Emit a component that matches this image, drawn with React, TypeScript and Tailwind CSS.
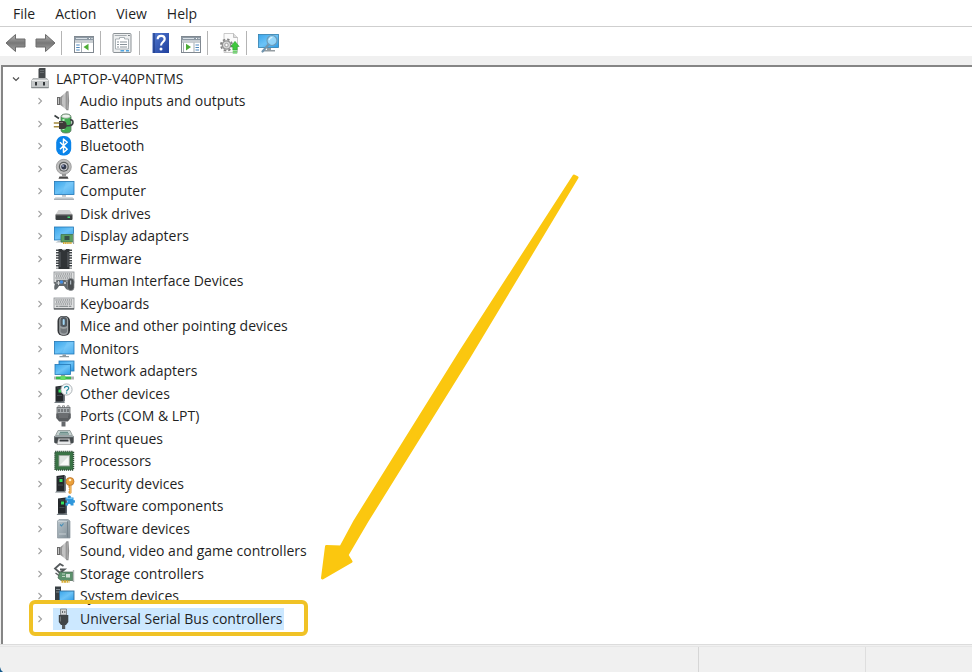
import React from "react";

type Glyph = () => React.ReactElement;

function Svg({ children }: { children: React.ReactNode }) {
  return (
    <svg viewBox="0 0 22 22" className="size-[22px] shrink-0" aria-hidden="true">
      {children}
    </svg>
  );
}

const Defs = () => (
  <svg className="absolute size-0" aria-hidden="true">
    <defs>
      <linearGradient id="screen" x1="0" y1="0" x2="1" y2="1">
        <stop offset="0" stopColor="#3aa5ea" />
        <stop offset="0.5" stopColor="#6cc3f7" />
        <stop offset="1" stopColor="#2c9ae4" />
      </linearGradient>
      <linearGradient id="metal" x1="0" y1="0" x2="1" y2="0">
        <stop offset="0" stopColor="#7c7c7c" />
        <stop offset="0.6" stopColor="#cfcfcf" />
        <stop offset="1" stopColor="#8a8a8a" />
      </linearGradient>
      <linearGradient id="arrow" x1="0" y1="0" x2="0" y2="1">
        <stop offset="0" stopColor="#b5b5b5" />
        <stop offset="0.5" stopColor="#777" />
        <stop offset="1" stopColor="#a5a5a5" />
      </linearGradient>
      <linearGradient id="case" x1="0" y1="0" x2="1" y2="1">
        <stop offset="0" stopColor="#b9c5cc" />
        <stop offset="1" stopColor="#7f8c94" />
      </linearGradient>
      <linearGradient id="book" x1="0" y1="0" x2="1" y2="1">
        <stop offset="0" stopColor="#5078d0" />
        <stop offset="1" stopColor="#1f3f9c" />
      </linearGradient>
    </defs>
  </svg>
);

const Tower = ({ x = 2, y = 1 }: { x?: number; y?: number }) => (
  <g transform={`translate(${x} ${y})`}>
    <path d="M1 1.5 8.5 .5 10 1.5V16.500L2 17.500 1 16.500Z" fill="#25292c" />
    <path d="M8.500 1v15.500l1.500-.5V1.500Z" fill="#59616a" />
    <path d="M2.500 3h5M2.500 10.500h5" stroke="#4d555b" strokeWidth=".8" />
    <rect x="4" y="4.500" width="3" height="3" fill="#35e05a" />
    <path d="M-.5 18h11l-1-1.500H1Z" fill="#747d82" />
  </g>
);

const Speaker: Glyph = () => (
  <Svg>
    <path d="M4 7h3.500v8H4Z" fill="#6a6a6a" />
    <path d="M5 8h1v6H5Z" fill="#c6c6c6" />
    <path d="M7.500 7 14 1.200v19L7.500 15Z" fill="url(#metal)" />
    <path d="M9 7.800 12 5v11.500L9 14Z" fill="#c2c2c2" />
    <path d="M13.500 1.200h2q1.300 9.500 0 19h-2Z" fill="#8d8d8d" />
    <path d="M14.300 2.500v16.500" stroke="#b5b5b5" strokeWidth=".8" />
  </Svg>
);

const Battery: Glyph = () => (
  <Svg>
    <path d="M8 4q0-3 5-3t5 3v13q0 3-5 3t-5-3Z" fill="#42ad52" stroke="#55735a" strokeWidth=".8" />
    <ellipse cx="13" cy="3.200" rx="4.300" ry="2" fill="#eef5ee" stroke="#8a958b" strokeWidth=".6" />
    <path d="M10.500 6v11" stroke="#b7eec0" strokeWidth="2" />
    <path d="M17 7c4-1 4 5 0 5.500-2 .5-3 0-4 .500M1.500 2.500l4.500 3" fill="none" stroke="#3b4142" strokeWidth="1.600" />
    <path d="M6 8h4.500c4 0 4.500 8 0 8H6Z" fill="#3e3b38" />
    <path d="M6.500 9.500H10" stroke="#838079" strokeWidth="1" />
    <path d="M.8 10H6M.8 13.800H6" stroke="#a58b3b" strokeWidth="1.500" />
  </Svg>
);

const Bluetooth: Glyph = () => (
  <Svg>
    <rect x="3.200" y="1" width="15" height="19.500" rx="6.500" fill="#0a84ea" />
    <path d="M7 7.200l7.200 7-3.700 3.300V4l3.700 3.300L7 14.200" fill="none" stroke="#fff" strokeWidth="1.500" strokeLinejoin="round" />
  </Svg>
);

const Camera: Glyph = () => (
  <Svg>
    <path d="M6.500 18.500h8l1 2.200h-10Z" fill="#474747" />
    <path d="M9 16h4v3H9Z" fill="#999" />
    <circle cx="10.800" cy="8.800" r="7.500" fill="#bdbdbd" stroke="#898989" strokeWidth=".7" />
    <circle cx="10.800" cy="8.800" r="5" fill="#5d6060" />
    <circle cx="10.800" cy="8.800" r="3.700" fill="#d1d1d6" />
    <circle cx="10.800" cy="8.800" r="2.600" fill="#333b4d" />
    <circle cx="10" cy="8" r=".9" fill="#a4aed2" />
  </Svg>
);

const Computer: Glyph = () => (
  <Svg>
    <rect x="1.500" y="1.500" width="19.500" height="13" fill="url(#screen)" stroke="#2477b5" strokeWidth=".8" />
    <path d="M13 2 20.500 2V14L9 14Z" fill="#8cd2fb" opacity=".35" />
    <path d="M9 15h4v1.800H9Z" fill="#c0c5c9" />
    <path d="M2.500 17h17l1.500 2.500H1Z" fill="#d6dadd" />
    <path d="M1 19.200h20" stroke="#8d979e" strokeWidth="1" />
  </Svg>
);

const Disk: Glyph = () => (
  <Svg>
    <path d="M5.500 7h11l3 4.500h-17Z" fill="#d0d0d0" />
    <path d="M2.500 11.500h17V16q0 1-1 1h-15q-1 0-1-1Z" fill="#3a3d3f" />
    <path d="M3 12h16" stroke="#777" strokeWidth=".8" />
    <rect x="14.500" y="13.500" width="2.500" height="1.500" fill="#43dd72" />
  </Svg>
);

const Display: Glyph = () => (
  <Svg>
    <rect x="1.500" y="2" width="19" height="13" fill="url(#screen)" stroke="#2477b5" strokeWidth=".8" />
    <path d="M2.500 17.500 6 15.500h4v2Z" fill="#b8c2c8" />
    <path d="M8 9.500h12.500V17H8Z" fill="#5b9e61" stroke="#3d6e46" strokeWidth=".7" />
    <rect x="11.500" y="11" width="5" height="4" fill="#355048" />
    <path d="M10 18h9" stroke="#d4a934" strokeWidth="2" strokeDasharray="1.500 .6" />
    <path d="M20.500 8.500v10.500" stroke="#9ba2a5" strokeWidth="1.200" />
  </Svg>
);

const Firmware: Glyph = () => (
  <Svg>
    <path d="M4.500 1.500v19M17.500 1.500v19" stroke="#41464a" strokeWidth="3" strokeDasharray="1.500 1.100" />
    <path d="M5.500 1h3.500q2 2.500 4 0H16.500v20H5.500Z" fill="#303437" />
    <path d="M7 4v15M15 4v15" stroke="#6a7075" strokeWidth=".8" />
    <path d="M9 1q2 2.500 4 0Z" fill="#c9cdd0" />
  </Svg>
);

const Keys = ({ y }: { y: number }) => (
  <g transform={`translate(0 ${y})`}>
    <rect x="1" y="0" width="20" height="11" fill="#dfe0e1" stroke="#8c9194" strokeWidth=".8" />
    <path d="M2.500 2h17M3 4h16M2.500 6h17" stroke="#6a6f72" strokeWidth="1.100" strokeDasharray="1.200 .7" />
    <path d="M3 8.200h16" stroke="#73787b" strokeWidth="1.100" strokeDasharray="2.500 .7 9 .7" />
    <path d="M1 10.900h20" stroke="#4c5154" strokeWidth="1.200" />
  </g>
);

const Hid: Glyph = () => (
  <Svg>
    <Keys y={2} />
    <path d="M1.500 19.500c-1-3 1-9.500 4-9.500h6c3 0 4 6.500 3.500 9.500-1.500 1-3-2-4-3.500H6c-1 2-3 4.500-4.500 3.500Z" fill="#63696d" />
    <path d="M3.500 13h4M5.500 11v4" stroke="#d1d5d8" strokeWidth="1" />
    <circle cx="8.500" cy="12" r="1.700" fill="#428be1" />
    <circle cx="12" cy="13" r="1" fill="#dedede" />
    <rect x="14.500" y="8.500" width="6.500" height="12" rx="3" fill="#4b4f52" stroke="#858a8e" strokeWidth=".7" />
    <path d="M17.700 10.500v4" stroke="#c7d2db" strokeWidth="1" />
  </Svg>
);

const Keyboard: Glyph = () => (
  <Svg>
    <Keys y={5} />
  </Svg>
);

const Mouse: Glyph = () => (
  <Svg>
    <rect x="4.500" y="1" width="12.500" height="19.800" rx="5" fill="#34373a" />
    <rect x="6.200" y="1.500" width="9" height="18.500" rx="4" fill="#9ca0a3" />
    <path d="M7.500 11V5q0-3 3.200-3T14 5v6q-3 2-6.500 0Z" fill="#525960" />
    <rect x="9.700" y="4" width="2" height="6" rx="1" fill="#a2d6f5" />
    <path d="M7.500 13q3 2 6.500 0v4q-3 3-6.500 0Z" fill="#73787c" />
  </Svg>
);

const Monitor: Glyph = () => (
  <Svg>
    <rect x="1.500" y="3.500" width="19.500" height="12.500" fill="url(#screen)" stroke="#2477b5" strokeWidth=".8" />
    <path d="M14 4H20.500V15.500H9Z" fill="#8cd2fb" opacity=".35" />
    <path d="M9.500 16.500h3.500V18h3v1.200H6.500V18h3Z" fill="#8e999f" />
  </Svg>
);

const Network: Glyph = () => (
  <Svg>
    <rect x="6" y="1" width="15" height="10" fill="url(#screen)" stroke="#2477b5" strokeWidth=".8" />
    <rect x="2" y="4.500" width="15.500" height="10" fill="url(#screen)" stroke="#2477b5" strokeWidth=".8" />
    <path d="M8 15h4v2H8Z" fill="#969ca0" />
    <path d="M1 18h20" stroke="#b0b5b5" strokeWidth="3" />
    <path d="M3 18h15" stroke="#38b949" strokeWidth="2.600" />
    <path d="M7.500 15.800h5v4.200h-5Z" fill="#67db68" />
  </Svg>
);

const Other: Glyph = () => (
  <Svg>
    <Tower x={1.500} y={2} />
    <circle cx="13.500" cy="6.500" r="5.600" fill="#f7f9fa" stroke="#a5abaf" strokeWidth=".9" />
    <path d="M11.500 5.200c0-2.600 4.200-2.500 4.200 0 0 1.600-2.100 1.500-2.100 3.300" fill="none" stroke="#2b8b9f" strokeWidth="1.200" />
    <circle cx="13.600" cy="10" r=".8" fill="#2b8b9f" />
  </Svg>
);

const Ports: Glyph = () => (
  <Svg>
    <path d="M5 4V.8h2V4M9.500 4V.8h2V4M14 4V.8h2V4" fill="none" stroke="#8c9092" strokeWidth="1" />
    <rect x="4" y="2.500" width="13" height="6" fill="#a8adb0" stroke="#65696c" strokeWidth=".8" />
    <path d="M6 4v3M9 4v3M12 4v3M15 4v3" stroke="#55595b" strokeWidth="1.200" />
    <path d="M3.200 8.500h14.600V13l-3 3.500H6.200l-3-3.500Z" fill="#5a5d60" />
    <path d="M5.500 10h10M6 12h9" stroke="#85898c" strokeWidth=".8" />
    <path d="M8.500 16.500h4v5h-4Z" fill="#66696c" />
  </Svg>
);

const Printer: Glyph = () => (
  <Svg>
    <path d="M5 2.500h12l2.500 5h-17Z" fill="#c5d1d0" stroke="#7e8787" strokeWidth=".7" />
    <path d="M7 4.300h8M6 6h10" stroke="#567e78" strokeWidth="1" />
    <path d="M1.200 8h19.500v6.500l-1.500 1H2.700l-1.500-1Z" fill="#454b4e" />
    <path d="M1.500 8.500h19" stroke="#9da7aa" strokeWidth="1.400" />
    <path d="M5.500 10.500h11L18 16.500H4Z" fill="#e6e8e9" stroke="#777" strokeWidth=".5" />
    <path d="M6.500 11.500h9v2h-9Z" fill="#363b3e" />
  </Svg>
);

const Processor: Glyph = () => (
  <Svg>
    <rect x="2.200" y="1.800" width="18" height="18" fill="#467750" stroke="#2f5139" strokeWidth="2" strokeDasharray="1.200 .8" />
    <rect x="2.700" y="2.300" width="17" height="17" fill="#397345" />
    <rect x="6" y="5.500" width="10.500" height="10.500" fill="#dfe4e1" stroke="#99a39b" strokeWidth=".8" />
    <path d="M7 15 15.500 6.500V15Z" fill="#f8f9f8" />
  </Svg>
);

const Security: Glyph = () => (
  <Svg>
    <Tower x={2.500} y={1.500} />
    <path d="M15.500 11.500h3v8.500l-1.500 1-1.500-1v-1.500l1-1-1-1 1-1-1-1Z" fill="#dc9434" />
    <circle cx="17" cy="8.500" r="4" fill="#eba03b" stroke="#b56c22" strokeWidth=".7" />
    <circle cx="17" cy="7" r="1.300" fill="#fff2d3" />
    <path d="M17.300 12.500V20" stroke="#f9c773" strokeWidth=".8" />
  </Svg>
);

const Component: Glyph = () => (
  <Svg>
    <Tower x={4} y={2} />
    <path d="M12.500 2.500h2.500q-1-2 1.300-2t1.300 2h2.900v2.700q1.500-.5 1.500 1.300t-1.500 1.300v2.700h-2.900q.5-1.800-1.300-1.800t-1.300 1.800h-2.500V7.800q2 .5 2-1.200t-2-1.300Z" fill="#2f97dc" />
    <path d="M13.500 3.500h6" stroke="#6fc6f7" strokeWidth="1" />
  </Svg>
);

const Device: Glyph = () => (
  <Svg>
    <path d="M6 1.500h9l2 1.500v17H4.500V3Z" fill="url(#case)" stroke="#8b969d" strokeWidth=".7" />
    <path d="M14.500 3.500v16" stroke="#75838c" strokeWidth="1" />
    <path d="M5 3.500h9M6 16h7" stroke="#d0d8dc" strokeWidth=".8" />
    <path d="M7 6.500 8.500 8 10.500 5.500" stroke="#438eb8" strokeWidth="1.100" fill="none" />
  </Svg>
);

const Storage: Glyph = () => (
  <Svg>
    <path d="M10.500 3 7 1 2 5.500 7 10l4.500-3.500H7" fill="none" stroke="#555a5c" strokeWidth="1.800" />
    <path d="M2.500 10 8 14" stroke="#5b5f61" strokeWidth="1.500" />
    <path d="M6.500 9H20v8.500H8L5 15Z" fill="#5b916c" stroke="#47634f" strokeWidth=".7" />
    <rect x="13" y="11" width="4" height="3.500" fill="#d5e2d7" />
    <path d="M9 11h3M9 13.500h3" stroke="#c0d3c2" strokeWidth="1" />
    <path d="M8.500 18.500h8" stroke="#d8ad36" strokeWidth="2.300" strokeDasharray="2 .5" />
    <path d="M20.500 7v12" stroke="#b4b8b9" strokeWidth="1.400" />
  </Svg>
);

const System: Glyph = () => (
  <Svg>
    <path d="M2 1.500h6V18H2Z" fill="#373e43" />
    <path d="M3 4.500h4M3 7h4" stroke="#808a90" strokeWidth="1" />
    <rect x="6.500" y="6" width="14.500" height="10" fill="url(#screen)" stroke="#306e9c" strokeWidth=".9" />
    <path d="M11 17h5v1.500h-5Z" fill="#69747a" />
  </Svg>
);

const Usb: Glyph = () => (
  <Svg>
    <path d="M7.500 1h6v6h-6Z" fill="#d2d5d7" stroke="#767b7e" strokeWidth=".8" />
    <path d="M9 3h1v2H9ZM11.300 3h1v2h-1Z" fill="#606568" />
    <path d="M5.800 7h9.500v7l-2.300 3H8l-2.200-3Z" fill="#3f4447" />
    <path d="M7.500 8.500v5" stroke="#73787b" strokeWidth="1" />
    <path d="M9 17h3.200v4H9Z" fill="#54595c" />
  </Svg>
);

const Root: Glyph = () => (
  <Svg>
    <path d="M9.500 1 10.500 0h6v10h-7Z" fill="#44484b" />
    <path d="M11 2.500h4M11 4.500h4" stroke="#6d7376" strokeWidth=".8" />
    <path d="M4 10.500h14l1.500 2.500v7H2.500v-7Z" fill="#c6c9ca" stroke="#909496" strokeWidth=".6" />
    <path d="M3 12.500h16" stroke="#eee" strokeWidth="1" />
    <path d="M6 14h2v3.500H6ZM14 14h2v3.500h-2Z" fill="#33373a" />
    <path d="M2.500 19.500h17" stroke="#858a8c" strokeWidth="1" />
  </Svg>
);

const ArrowGlyph = ({ flip = false }: { flip?: boolean }) => (
  <Svg>
    <path
      d={flip ? "M21 11 11.500 2.500V7H2v8h9.500v4.500Z" : "M1 11 10.500 2.500V7H20v8h-9.500v4.500Z"}
      fill="url(#arrow)"
      stroke="#6c6c6c"
      strokeWidth="1"
      strokeLinejoin="round"
    />
  </Svg>
);

const PaneGlyph = ({ flip = false }: { flip?: boolean }) => (
  <Svg>
    <rect x="1.500" y="4.500" width="19" height="16" fill="#fff" stroke="#808890" strokeWidth="1" />
    <path d="M1.500 5h19v3.500h-19Z" fill="#8e9aa5" />
    <path d="M3 6.500h11" stroke="#d9e0e6" strokeWidth="1" />
    <path d="M16 6.500h1M18.500 6.500h1" stroke="#fff" strokeWidth="1.200" />
    <path d="M2 10h18" stroke="#b8bfc5" strokeWidth="1.500" />
    {flip ? (
      <>
        <path d="M14 10.500V20M3.500 10.500V20" stroke="#a5adb3" strokeWidth="1" />
        <path d="M15.500 13h3.500M15.500 15.500h3.500M15.500 18h3.500" stroke="#4d87bd" strokeWidth="1.200" />
        <path d="M6 11.700 11 15 6 18.500Z" fill="#4dac36" />
      </>
    ) : (
      <>
        <path d="M8.500 10.500V20" stroke="#a5adb3" strokeWidth="1" />
        <path d="M3.200 13h3.500M3.200 15.500h3.500M3.200 18h3.500" stroke="#4d87bd" strokeWidth="1.200" />
        <path d="M15.500 11.700 10.500 15l5 3.500Z" fill="#4dac36" />
      </>
    )}
  </Svg>
);

const PropsGlyph = () => (
  <Svg>
    <rect x="1" y="1.500" width="18" height="19" rx="1" fill="#eceeef" stroke="#8c9296" strokeWidth="1" />
    <path d="M2.700 3.500h12" stroke="#a5abaf" strokeWidth="1" />
    <path d="M16.200 3.500h1.500" stroke="#5c6368" strokeWidth="1.200" />
    <path d="M3.500 7h4V5.500h5V7h4v10h-13Z" fill="#fff" stroke="#979fa4" strokeWidth=".8" />
    <path d="M5 10h2M5 12.500h2M5 15h2M8 10h7M8 12.500h7M8 15h7" stroke="#889299" strokeWidth="1" />
    <path d="M8.500 18.800h3.500M14 18.800h3" stroke="#4da3df" strokeWidth="1.400" />
  </Svg>
);

const HelpGlyph = () => (
  <Svg>
    <rect x="1.500" y="1" width="16.500" height="20" fill="url(#book)" />
    <path d="M3 1v20" stroke="#193376" strokeWidth="1" />
    <path d="M6.700 7.200c0-4.500 7-4.300 7-.2 0 3-3.700 3-3.700 6.500" fill="none" stroke="#fff" strokeWidth="2.200" />
    <circle cx="10" cy="17" r="1.500" fill="#fff" />
  </Svg>
);

const UpdateGlyph = () => (
  <Svg>
    <path d="M5 1.500h9.500l4 4V20.500H5Z" fill="#fafafa" stroke="#bcbcbc" strokeWidth=".8" />
    <path d="M14.500 1.500v4h4" fill="#ddd" stroke="#aaa" strokeWidth=".7" />
    <circle cx="7.500" cy="13" r="5.600" fill="none" stroke="#838383" strokeWidth="1.800" strokeDasharray="2.400 2" />
    <circle cx="7.500" cy="13" r="4.200" fill="#d7d7d7" stroke="#929292" strokeWidth="1.300" />
    <circle cx="7.500" cy="13" r="1.700" fill="#fff" stroke="#888" strokeWidth=".7" />
    <path d="M16 9.300 20.200 14.500h-2V18h-4.400v-3.500h-2Z" fill="#3fc83e" stroke="#299c2b" strokeWidth=".5" />
    <path d="M13.700 19.300h4.500M13.700 21h4.500" stroke="#3fc83e" strokeWidth="1.100" />
  </Svg>
);

const ScanGlyph = () => (
  <Svg>
    <rect x="0.500" y="2.500" width="20" height="13" fill="url(#screen)" stroke="#307ead" strokeWidth=".8" />
    <path d="M9 16h4v2h4v1.500H5V18h4Z" fill="#959da2" />
    <path d="m11 12-6.500 7.500" stroke="#7195ae" strokeWidth="2.200" strokeLinecap="round" />
    <circle cx="14" cy="8.500" r="5" fill="#a2dcfa" fillOpacity=".8" stroke="#6c9dbb" strokeWidth="1.200" />
    <path d="M11 8q.8-2.500 3.300-2.500" stroke="#e6f7ff" strokeWidth="1.200" fill="none" />
  </Svg>
);

const devices: { name: string; Icon: Glyph }[] = [
  { name: "Audio inputs and outputs", Icon: Speaker },
  { name: "Batteries", Icon: Battery },
  { name: "Bluetooth", Icon: Bluetooth },
  { name: "Cameras", Icon: Camera },
  { name: "Computer", Icon: Computer },
  { name: "Disk drives", Icon: Disk },
  { name: "Display adapters", Icon: Display },
  { name: "Firmware", Icon: Firmware },
  { name: "Human Interface Devices", Icon: Hid },
  { name: "Keyboards", Icon: Keyboard },
  { name: "Mice and other pointing devices", Icon: Mouse },
  { name: "Monitors", Icon: Monitor },
  { name: "Network adapters", Icon: Network },
  { name: "Other devices", Icon: Other },
  { name: "Ports (COM & LPT)", Icon: Ports },
  { name: "Print queues", Icon: Printer },
  { name: "Processors", Icon: Processor },
  { name: "Security devices", Icon: Security },
  { name: "Software components", Icon: Component },
  { name: "Software devices", Icon: Device },
  { name: "Sound, video and game controllers", Icon: Speaker },
  { name: "Storage controllers", Icon: Storage },
  { name: "System devices", Icon: System },
  { name: "Universal Serial Bus controllers", Icon: Usb },
];

function Tool({ label, children }: { label: string; children: React.ReactNode }) {
  return (
    <button type="button" aria-label={label} className="block shrink-0">
      {children}
    </button>
  );
}

function ToolGroup({ children }: { children: React.ReactNode }) {
  return (
    <div className="flex items-center gap-[7px] border-l border-[#b4b4b4] pl-[11px] pr-[5px] first:border-l-0 first:pl-[5px] h-6">
      {children}
    </div>
  );
}

function DeviceRow({ name, Icon, selected }: { name: string; Icon: Glyph; selected: boolean }) {
  return (
    <li role="treeitem" aria-selected={selected} className="relative flex items-center pl-[31px] odd:h-[22px] even:h-[23px]">
      <button type="button" aria-label={`Expand ${name}`} className="flex w-3 shrink-0 justify-center">
        <svg viewBox="0 0 6 8" className="h-2 w-1.5">
          <path d="M1.500 1 4.500 4 1.500 7" fill="none" stroke="#a0a0a0" strokeWidth="1.100" />
        </svg>
      </button>
      <span className={`ml-[7px] flex h-[22px] items-center gap-[5px] pr-0.5 ${selected ? "bg-[#cce8ff]" : ""}`}>
        <Icon />
        <span className="whitespace-nowrap">{name}</span>
      </span>
      {selected && (
        <span className="pointer-events-none absolute -top-[7px] left-[26px] h-9 w-[279px] rounded-md border-4 border-[#f0c226]" />
      )}
    </li>
  );
}

export default function App() {
  return (
    <div className="relative flex min-h-screen flex-col overflow-hidden bg-[#f0f0f0] font-['Open_Sans','Noto_Sans',sans-serif] text-sm leading-5 text-[#1f1f1f]">
      <Defs />
      <nav aria-label="Menu" className="flex h-[27px] shrink-0 items-center gap-5 border-b border-[#cfcfcf] bg-white px-[13px] pt-0.5">
        <button type="button">File</button>
        <button type="button">Action</button>
        <button type="button">View</button>
        <button type="button">Help</button>
      </nav>
      <div role="toolbar" aria-label="Tools" className="flex h-[29px] shrink-0 items-end bg-white pb-px">
        <ToolGroup>
          <Tool label="Back"><ArrowGlyph /></Tool>
          <Tool label="Forward"><ArrowGlyph flip /></Tool>
        </ToolGroup>
        <ToolGroup>
          <Tool label="Show or hide console tree"><PaneGlyph /></Tool>
        </ToolGroup>
        <ToolGroup>
          <Tool label="Properties"><PropsGlyph /></Tool>
        </ToolGroup>
        <ToolGroup>
          <Tool label="Help topics"><HelpGlyph /></Tool>
          <Tool label="Show or hide action pane"><PaneGlyph flip /></Tool>
        </ToolGroup>
        <ToolGroup>
          <Tool label="Update driver"><UpdateGlyph /></Tool>
        </ToolGroup>
        <ToolGroup>
          <Tool label="Scan for hardware changes"><ScanGlyph /></Tool>
        </ToolGroup>
      </div>
      <main className="relative ml-px mt-[9px] flex-1 border-l-2 border-t-2 border-[#858585] bg-white">
        <div className="flex h-[23px] items-center pl-[7px]">
          <button type="button" aria-label="Collapse LAPTOP-V40PNTMS" className="flex w-3 justify-center">
            <svg viewBox="0 0 8 6" className="h-1.5 w-2">
              <path d="M1 1.500 4 4.500 7 1.500" fill="none" stroke="#505050" strokeWidth="1.200" />
            </svg>
          </button>
          <span className="ml-[7px] flex items-center gap-[5px]">
            <Root />
            <span>LAPTOP-V40PNTMS</span>
          </span>
        </div>
        <ul role="tree" aria-label="Devices">
          {devices.map((d, i) => (
            <DeviceRow key={d.name} {...d} selected={i === devices.length - 1} />
          ))}
        </ul>
        <svg
          viewBox="316 170 270 416"
          className="pointer-events-none absolute left-[313px] top-[103px] h-[416px] w-[270px]"
          aria-hidden="true"
        >
          <path
            d="M574 176 577 177.500 469 357 367 521 347 555 351 561.500 322.500 578 326.500 546.500 341 547 355 521 461 351Z"
            fill="#fbc70f"
            stroke="#fbc70f"
            strokeWidth="3"
            strokeLinejoin="round"
          />
        </svg>
      </main>
      <footer className="flex h-7 shrink-0 border-t border-[#dcdcdc]">
        <div className="mt-px flex flex-1 border-t border-[#e6e6e6]">
          <div className="flex-1 border-r border-[#d6d6d6]" />
          <div className="w-[167px] border-r border-[#dedede]" />
          <div className="w-[106px]" />
        </div>
      </footer>
      <svg viewBox="0 0 4 5" className="absolute bottom-0 left-0 h-[5px] w-1" aria-hidden="true">
        <path d="M0 0Q.5 3.500 3 5H0Z" fill="#155a8c" />
      </svg>
    </div>
  );
}
